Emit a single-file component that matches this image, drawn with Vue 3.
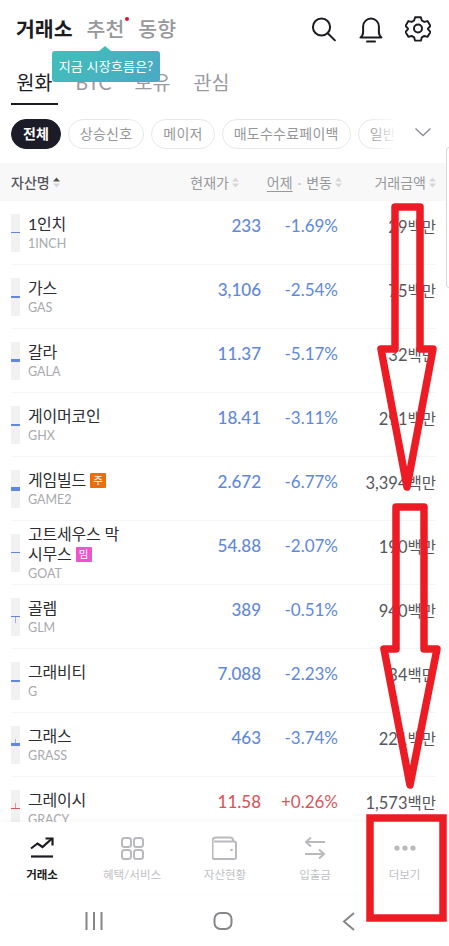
<template>
  <div class="page">
    <header class="topbar">
      <nav class="main-tabs">
        <span class="main-tab active">거래소</span>
        <span class="main-tab has-dot">추천</span>
        <span class="main-tab">동향</span>
      </nav>
      <div class="top-icons">
        <svg width="26" height="26" viewBox="0 0 26 26" fill="none" stroke="#1b1c22" stroke-width="2">
          <circle cx="10.500" cy="11" r="8.600" />
          <path d="M16.700 17.200l7.200 7.200" stroke-linecap="round" />
        </svg>
        <svg width="26" height="28" viewBox="0 0 26 28" fill="none" stroke="#1b1c22" stroke-width="2">
          <path d="M2.500 22.500c1.800-1.400 2.600-3 2.600-5.500v-5.500a7.900 7.900 0 0 1 15.800 0V17c0 2.500.8 4.100 2.600 5.500z" stroke-linejoin="round" />
          <path d="M9 26.500h8" stroke-linecap="round" />
        </svg>
        <svg width="26" height="26" viewBox="0 0 26 26" fill="none" stroke="#1b1c22" stroke-width="2" stroke-linejoin="round">
          <path d="M10 1.800h6l1 3.400 2.600 1.500 3.400-.9 3 5.100-2.500 2.600v1l2.500 2.600-3 5.100-3.400-.9-2.600 1.500-1 3.400h-6l-1-3.400-2.600-1.500-3.400.9-3-5.100 2.500-2.600v-1L0 10.900l3-5.100 3.400.9L9 5.200z" transform="translate(0.500 -0.500) scale(0.960)" />
          <circle cx="13" cy="12.500" r="4" />
        </svg>
      </div>
    </header>

    <nav class="sub-tabs">
      <span class="sub-tab active">원화</span>
      <span class="sub-tab">BTC</span>
      <span class="sub-tab">보유</span>
      <span class="sub-tab">관심</span>
    </nav>

    <div class="chips-row">
      <div class="chips">
        <span v-for="(chip, i) in chips" :key="chip" class="chip" :class="{ on: i === 0 }">{{ chip }}</span>
      </div>
      <div class="chips-fade"></div>
      <svg class="chevron" width="18" height="10" viewBox="0 0 18 10" fill="none" stroke="#8f9096" stroke-width="1.500">
        <path d="M1.500 1.500L9 8.500l7.500-7" />
      </svg>
    </div>

    <div class="table-head">
      <span class="head-name">자산명<svg class="sort" width="7" height="11" viewBox="0 0 7 11"><path d="M3.500 0.500L7 4.500H0z" fill="#55565c" /><path d="M3.500 10.500L7 6.500H0z" fill="#d6d7da" /></svg></span>
      <span class="head-price">현재가<svg class="sort" width="7" height="11" viewBox="0 0 7 11"><path d="M3.500 0.500L7 4.500H0z" fill="#d6d7da" /><path d="M3.500 10.500L7 6.500H0z" fill="#d6d7da" /></svg></span>
      <span class="head-change"><u>어제</u><i class="sep">·</i>변동<svg class="sort" width="7" height="11" viewBox="0 0 7 11"><path d="M3.500 0.500L7 4.500H0z" fill="#d6d7da" /><path d="M3.500 10.500L7 6.500H0z" fill="#d6d7da" /></svg></span>
      <span class="head-volume">거래금액<svg class="sort" width="7" height="11" viewBox="0 0 7 11"><path d="M3.500 0.500L7 4.500H0z" fill="#d6d7da" /><path d="M3.500 10.500L7 6.500H0z" fill="#d6d7da" /></svg></span>
    </div>

    <div class="list">
      <div v-for="row in rows" :key="row.symbol" class="row" :class="{ up: row.up }">
        <div class="candle">
          <span v-if="row.wick" class="wick" :class="row.wick"></span>
          <span class="body" :style="{ height: row.bar + 'px' }"></span>
        </div>
        <div class="name">
          <div class="kr">{{ row.name }}<span v-if="row.badge" class="badge" :class="row.badgeClass">{{ row.badge }}</span></div>
          <div class="symbol">{{ row.symbol }}</div>
        </div>
        <div class="price">{{ row.price }}</div>
        <div class="change">{{ row.change }}</div>
        <div class="volume">{{ row.volume }}<span class="unit">백만</span></div>
      </div>
    </div>

    <nav class="bottom-nav">
      <div class="nav-item active">
        <svg width="26" height="24" viewBox="0 0 26 24" fill="none" stroke="#1b1c22" stroke-width="2.200">
          <path d="M2 12.500l6.500-5 5 3.500L22.500 3" />
          <path d="M16.500 2.500h7v7" />
          <path d="M2 20.500h22" />
        </svg>
        <span>거래소</span>
      </div>
      <div class="nav-item">
        <svg width="26" height="24" viewBox="0 0 26 24" fill="none" stroke="#b9babe" stroke-width="2">
          <rect x="3" y="2" width="9" height="9" rx="2.500" />
          <rect x="15" y="2" width="9" height="9" rx="2.500" />
          <rect x="3" y="14" width="9" height="9" rx="2.500" />
          <rect x="15" y="14" width="9" height="9" rx="2.500" />
        </svg>
        <span>혜택/서비스</span>
      </div>
      <div class="nav-item">
        <svg width="26" height="24" viewBox="1 0 26 24" fill="none" stroke="#b9babe" stroke-width="2">
          <path d="M5 1.500h14c2 0 3 1 3.300 3M3 5.500h20a2 2 0 0 1 2 2v13.500a2 2 0 0 1-2 2H3.500a2 2 0 0 1-2-2V5c0-2 1.500-3.500 3.500-3.500" />
          <circle cx="20.500" cy="14" r="1.300" fill="#b9babe" stroke="none" />
        </svg>
        <span>자산현황</span>
      </div>
      <div class="nav-item">
        <svg width="26" height="24" viewBox="0 0 26 24" fill="none" stroke="#b9babe" stroke-width="2">
          <path d="M23 6H4M9 1.500L4 6l5 4.500" />
          <path d="M3 18h19M17 13.500l5 4.500-5 4.500" />
        </svg>
        <span>입출금</span>
      </div>
      <div class="nav-item">
        <svg width="26" height="24" viewBox="0 0 26 24" fill="#b9babe">
          <circle cx="5" cy="12" r="2.600" />
          <circle cx="13" cy="12" r="2.600" />
          <circle cx="21" cy="12" r="2.600" />
        </svg>
        <span>더보기</span>
      </div>
    </nav>

    <footer class="system-nav">
      <svg width="18" height="18" viewBox="0 0 18 18" stroke="#85868a" stroke-width="2"><path d="M1.500 0v18M9 0v18M16.500 0v18" /></svg>
      <svg width="20" height="18" viewBox="0 0 20 18" fill="none" stroke="#85868a" stroke-width="2"><rect x="1.500" y="1" width="17" height="16" rx="6" /></svg>
      <svg width="13" height="19" viewBox="0 0 13 19" fill="none" stroke="#85868a" stroke-width="2"><path d="M12 1L2 9.500l10 8.500" /></svg>
    </footer>

    <div class="tooltip">지금 시장흐름은?</div>
    <div class="scroll-thumb"></div>

    <svg class="marks" width="449" height="946" viewBox="0 0 449 946" fill="none" stroke="#ed1c24" stroke-width="7.500" stroke-linejoin="round">
      <path d="M395 207h25v142h13l-26 138-26-138h14z" />
      <path d="M396 507h28v142h13l-27 136-26-136h12z" />
      <rect x="370" y="818" width="73" height="100" stroke-linejoin="miter" />
    </svg>
  </div>
</template>

<script setup>
const chips = ["전체", "상승신호", "메이저", "매도수수료페이백", "일반"];

const rows = [
  { name: "1인치", symbol: "1INCH", price: "233", change: "-1.69%", volume: "29", bar: 1.5 },
  { name: "가스", symbol: "GAS", price: "3,106", change: "-2.54%", volume: "75", bar: 2 },
  { name: "갈라", symbol: "GALA", price: "11.37", change: "-5.17%", volume: "32", bar: 3 },
  { name: "게이머코인", symbol: "GHX", price: "18.41", change: "-3.11%", volume: "291", bar: 2 },
  { name: "게임빌드", symbol: "GAME2", price: "2.672", change: "-6.77%", volume: "3,394", bar: 4, badge: "주", badgeClass: "orange" },
  { name: "고트세우스 막시무스", symbol: "GOAT", price: "54.88", change: "-2.07%", volume: "190", bar: 1.5, badge: "밈", badgeClass: "pink" },
  { name: "골렘", symbol: "GLM", price: "389", change: "-0.51%", volume: "940", bar: 1, wick: "down" },
  { name: "그래비티", symbol: "G", price: "7.088", change: "-2.23%", volume: "34", bar: 2 },
  { name: "그래스", symbol: "GRASS", price: "463", change: "-3.74%", volume: "221", bar: 2.5, wick: "up" },
  { name: "그레이시", symbol: "GRACY", price: "11.58", change: "+0.26%", volume: "1,573", bar: 1.5, wick: "up", up: true },
];
</script>

<style>
body {
  margin: 0;
  background: #fff;
}
</style>

<style scoped>
.page {
  position: relative;
  width: 449px;
  height: 946px;
  overflow: hidden;
  display: flex;
  flex-direction: column;
  background: #fff;
  font-family: Lato, "Noto Sans CJK KR", sans-serif;
  color: #1b1c22;
}

.topbar {
  height: 57px;
  flex: none;
  display: flex;
  align-items: center;
  justify-content: space-between;
  padding: 0 18px 0 16px;
  box-sizing: border-box;
}

.main-tabs {
  display: flex;
  gap: 14px;
}

.main-tab {
  position: relative;
  font-size: 20.500px;
  font-weight: 500;
  line-height: 24px;
  color: #97989c;
}

.main-tab.active {
  font-weight: 700;
  color: #1b1c22;
}

.has-dot::after {
  content: "";
  position: absolute;
  right: -5px;
  top: 0;
  width: 4px;
  height: 4px;
  border-radius: 50%;
  background: #e8112d;
}

.top-icons {
  display: flex;
  align-items: center;
  gap: 21px;
}

.sub-tabs {
  height: 48px;
  flex: none;
  display: flex;
  box-sizing: border-box;
  padding-left: 11px;
  align-items: flex-end;
}

.sub-tab {
  width: 47px;
  margin-right: 12px;
  height: 46px;
  box-sizing: border-box;
  padding-top: 11px;
  text-align: center;
  font-size: 19.500px;
  line-height: 26px;
  color: #9a9b9f;
}

.sub-tab.active {
  color: #1b1c22;
  border-bottom: 2px solid #1b1c22;
}

.chips-row {
  position: relative;
  height: 58px;
  flex: none;
  overflow: hidden;
}

.chips {
  display: flex;
  gap: 7px;
  padding: 14px 0 0 11px;
  width: 440px;
}

.chip {
  flex: none;
  height: 30px;
  box-sizing: border-box;
  padding: 0 11px;
  border: 1px solid #e8e8ea;
  border-radius: 15px;
  font-size: 14px;
  line-height: 27px;
  letter-spacing: 0.25px;
  color: #96979b;
}

.chip.on {
  background: #1b1c27;
  border-color: #1b1c27;
  color: #fff;
  font-weight: 700;
  letter-spacing: 0;
}

.chips-fade {
  position: absolute;
  left: 368px;
  top: 0;
  width: 81px;
  height: 100%;
  background: linear-gradient(90deg, rgba(255, 255, 255, 0), #fff 36%);
}

.chevron {
  position: absolute;
  left: 414px;
  top: 22px;
}

.table-head {
  height: 38px;
  flex: none;
  display: flex;
  align-items: center;
  padding: 0 12px 0 11px;
  background: #f8f8f9;
  font-size: 14px;
  color: #97989c;
}

.table-head span {
  display: flex;
  align-items: center;
  white-space: nowrap;
}

.sort {
  margin-left: 3px;
  flex: none;
}

.head-name {
  color: #55565c;
  font-weight: 500;
  width: 170px;
}

.head-price {
  width: 58px;
  justify-content: flex-end;
}

.head-change {
  width: 103px;
  justify-content: flex-end;
}

.head-change u {
  text-underline-offset: 3px;
}

.sep {
  font-style: normal;
  color: #c3c4c8;
  margin: 0 5px;
}

.head-volume {
  width: 94px;
  justify-content: flex-end;
}

.list {
  flex: 1;
  min-height: 0;
  overflow: hidden;
}

.row {
  height: 64px;
  margin: 0 13px 0 11px;
  box-sizing: border-box;
  display: flex;
  align-items: center;
  border-bottom: 1px solid #f5f5f7;
  color: #6088dc;
}

.row.up {
  color: #d9575c;
}

.candle {
  position: relative;
  flex: none;
  width: 9px;
  height: 38px;
  background: #f1f1f2;
  display: flex;
  align-items: center;
}

.body {
  width: 100%;
  background: currentColor;
}

.wick {
  position: absolute;
  left: 4px;
  width: 1px;
  height: 6px;
  background: currentColor;
  opacity: 0.6;
}

.wick.up {
  top: 13px;
}

.wick.down {
  top: 19px;
}

.name {
  flex: none;
  width: 100px;
  margin-left: 8px;
}

.kr {
  font-size: 16px;
  line-height: 20px;
  color: #2c2d33;
  letter-spacing: -0.2px;
}

.symbol {
  margin-top: 1px;
  font-size: 12.500px;
  line-height: 17px;
  color: #a8a9ad;
  white-space: nowrap;
}

.badge {
  display: inline-block;
  width: 16px;
  height: 15px;
  margin-left: 4px;
  border-radius: 1px;
  vertical-align: 2px;
  font-size: 10.500px;
  line-height: 15px;
  text-align: center;
  color: #fff;
  letter-spacing: 0;
}

.badge.orange {
  background: #ed6d0b;
}

.badge.pink {
  background: #ee55cb;
}

.price,
.change,
.volume {
  padding-bottom: 14px;
}

.price {
  width: 133px;
  margin-left: auto;
  text-align: right;
  font-size: 17px;
  font-weight: 500;
}

.change {
  width: 77px;
  flex: none;
  text-align: right;
  font-size: 17px;
}

.volume {
  width: 98px;
  flex: none;
  text-align: right;
  font-size: 16.500px;
  color: #55565c;
  white-space: nowrap;
}

.unit {
  font-size: 15.500px;
}

.bottom-nav {
  position: relative;
  flex: none;
  height: 72px;
  display: grid;
  grid-template-columns: 84px 96px 90px 90px 89px;
  background: #fff;
  box-shadow: 0 -2px 6px rgba(0, 0, 0, 0.03);
}

.nav-item {
  display: flex;
  flex-direction: column;
  align-items: center;
  padding-top: 14px;
  box-sizing: border-box;
  gap: 7px;
  font-size: 11.500px;
  line-height: 16px;
  white-space: nowrap;
  color: #c0c1c5;
}

.nav-item.active {
  color: #1b1c22;
  font-weight: 700;
}

.system-nav {
  flex: none;
  height: 52px;
  display: flex;
  align-items: flex-start;
  justify-content: space-between;
  padding: 18px 94px 0 85px;
  box-sizing: border-box;
  background: #fff;
}

.tooltip {
  position: absolute;
  left: 52px;
  top: 51px;
  width: 108px;
  height: 31px;
  border-radius: 3px;
  background: linear-gradient(135deg, #41bfba, #4aa9c4);
  color: #fff;
  font-size: 13px;
  line-height: 31px;
  text-align: center;
  letter-spacing: 0.2px;
}

.tooltip::before {
  content: "";
  position: absolute;
  left: 47px;
  top: -5px;
  border-left: 6px solid transparent;
  border-right: 6px solid transparent;
  border-bottom: 5px solid #41bcbb;
}

.scroll-thumb {
  position: absolute;
  left: 446px;
  top: 147px;
  width: 6px;
  height: 141px;
  box-sizing: border-box;
  border: 1px solid #d9d9dc;
  border-radius: 4px;
  background: #fff;
}

.marks {
  position: absolute;
  left: 0;
  top: 0;
  pointer-events: none;
}
</style>
